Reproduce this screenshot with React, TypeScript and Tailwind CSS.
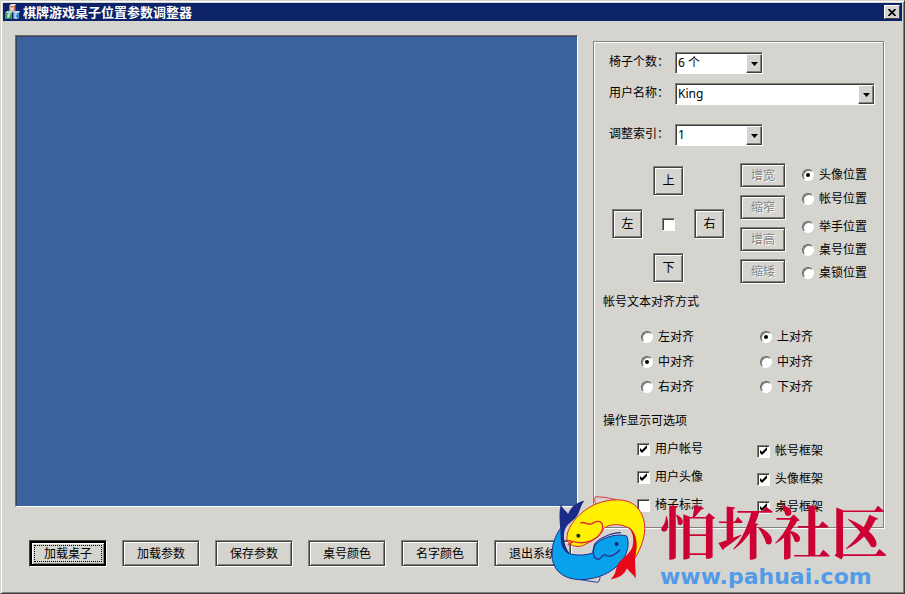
import {useState} from "react";
import type {ReactNode} from "react";

const POSITIONS_TOP = ['头像位置', '帐号位置'];
const POSITIONS_BOTTOM = ['举手位置', '桌号位置', '桌锁位置'];
const RESIZE_ACTIONS = ['增宽', '缩窄', '增高', '缩矮'];
const HORIZONTAL_ALIGN = ['左对齐', '中对齐', '右对齐'];
const VERTICAL_ALIGN = ['上对齐', '中对齐', '下对齐'];
const ACTIONS = ['加载桌子', '加载参数', '保存参数', '桌号颜色', '名字颜色', '退出系统'];

const BEVEL = 'border border-t-[#808080] border-l-[#808080] border-r-white border-b-white shadow-[inset_0_0_0_1px_#404040,inset_2px_2px_0_#fff,inset_-2px_-2px_0_#808080]';
const FOCUS_BEVEL = 'border border-t-[#404040] border-l-[#404040] border-r-white border-b-white shadow-[inset_0_0_0_2px_#000,inset_3px_3px_0_#fff,inset_-3px_-3px_0_#808080]';
const SUNKEN = 'border border-t-[#808080] border-l-[#808080] border-r-white border-b-white shadow-[inset_1px_1px_0_#404040]';

function AppIcon() {
    return (
        <svg width="15" height="16" viewBox="0 0 15 16" aria-hidden="true">
            <path d="M4 2 L6 0 H11 L10 2Z" fill="#f0d8c8" />
            <rect x="4" y="2" width="6" height="6" fill="#c8705c" />
            <path d="M10 2 L11 0 V7 L10 8Z" fill="#8c3c34" />
            <path d="M6 3 V7 M8 3 V7 M6 5 H8" stroke="#fff" strokeWidth="1" fill="none" />
            <rect x="0" y="9" width="7" height="6" fill="#2f9a62" />
            <path d="M0 9 L2 7 H8 L7 9Z" fill="#a4dcb8" />
            <path d="M3 14 V10 H6 M3 12 H5" stroke="#fff" fill="none" />
            <rect x="8" y="9" width="6" height="6" fill="#3f87cc" />
            <path d="M8 9 L9 7 H15 L14 9Z" fill="#b8dcf4" />
            <path d="M12 10 H10 V14 H12" stroke="#fff" fill="none" />
        </svg>
    )
}

function ComboBox(props: {id: string, label: string, options: string[], className: string}) {
    const {id, label, options, className} = props;
    return (
        <div className="flex items-center">
            <label htmlFor={id} className="w-[66px] pb-[2px]">{label}</label>
            <div className={`relative ${className}`}>
                <select id={id}
                        className={`block h-[22px] w-full appearance-none bg-white pl-[2px] pr-5 text-[12px] leading-5 outline-none ${SUNKEN}`}>
                    {options.map(item=><option key={item}>{item}</option>)}
                </select>
                <span className="pointer-events-none absolute top-[2px] right-[1px] bottom-[1px] flex w-4 items-center justify-center border border-t-white border-l-white border-r-[#404040] border-b-[#404040] bg-[#d4d3ce] shadow-[inset_-1px_-1px_0_#808080]">
                    <svg width="7" height="4" viewBox="0 0 7 4" aria-hidden="true">
                        <path d="M0 0 H7 L3.5 4Z" fill="#000" />
                    </svg>
                </span>
            </div>
        </div>
    )
}

function Radio(props: {name: string, label: string, checked: boolean, onChange: ()=>void, className: string}) {
    const {name, label, checked, onChange, className} = props;
    return (
        <label className={`flex items-center gap-[5px] whitespace-nowrap ${className}`}>
            <input type="radio" name={name} checked={checked} onChange={onChange}
                   className="flex size-3 shrink-0 appearance-none items-center justify-center rounded-full border border-t-[#606060] border-l-[#606060] border-r-white border-b-white bg-white shadow-[inset_1px_1px_0_#808080] checked:before:size-1 checked:before:rounded-full checked:before:bg-black" />
            <span>{label}</span>
        </label>
    )
}

function RadioGroup(props: {name: string, options: string[], initial: string}) {
    const [value, setValue] = useState(props.initial);
    return (
        <div className="w-[119px]">
            {props.options.map(item=>(
                <Radio key={item} name={props.name} label={item} checked={item === value}
                       onChange={()=>setValue(item)} className="h-[25px]" />
            ))}
        </div>
    )
}

function Check(props: {label?: string, name: string, initial?: boolean}) {
    const {label, name, initial} = props;
    return (
        <label className="flex items-center gap-[5px]">
            <span className="grid">
                <input type="checkbox" defaultChecked={initial} aria-label={label || name}
                       className={`peer col-start-1 row-start-1 size-[13px] appearance-none bg-white ${SUNKEN}`} />
                <svg viewBox="0 0 13 13" aria-hidden="true"
                     className="pointer-events-none invisible col-start-1 row-start-1 size-[13px] peer-checked:visible">
                    <path d="M3 5 V8 L5 10 L10 5 V2 L5 7Z" fill="#000" />
                </svg>
            </span>
            {label && <span>{label}</span>}
        </label>
    )
}

function ArrowButton(props: {children: ReactNode, className: string}) {
    return (
        <button type="button" className={`h-[30px] w-[31px] ${BEVEL} ${props.className}`}>
            {props.children}
        </button>
    )
}

function PositionPad() {
    const [position, setPosition] = useState(POSITIONS_TOP[0]);
    return (
        <div className="flex pt-[17px] pl-[18px]">
            <div className="mt-[2px] grid grid-cols-3 grid-rows-3 content-start items-center justify-items-center gap-x-[10px] gap-y-3">
                <ArrowButton className="col-start-2 row-start-1">上</ArrowButton>
                <ArrowButton className="col-start-1 row-start-2">左</ArrowButton>
                <div className="col-start-2 row-start-2"><Check name="居中" /></div>
                <ArrowButton className="col-start-3 row-start-2">右</ArrowButton>
                <ArrowButton className="col-start-2 row-start-3">下</ArrowButton>
            </div>
            <div className="ml-[15px] flex flex-col gap-[7px]">
                {RESIZE_ACTIONS.map(item=>(
                    <button key={item} type="button" disabled
                            className={`h-[25px] w-[46px] text-[#858585] [text-shadow:1px_1px_0_#fff] ${BEVEL}`}>
                        {item}
                    </button>
                ))}
            </div>
            <div className="ml-4 flex flex-col gap-1">
                <div>
                    {POSITIONS_TOP.map(item=>(
                        <Radio key={item} name="position" label={item} checked={item === position}
                               onChange={()=>setPosition(item)} className="h-6" />
                    ))}
                </div>
                <div>
                    {POSITIONS_BOTTOM.map(item=>(
                        <Radio key={item} name="position" label={item} checked={item === position}
                               onChange={()=>setPosition(item)} className="h-[23px]" />
                    ))}
                </div>
            </div>
        </div>
    )
}

function SettingsPanel() {
    return (
        <section className="mt-[6px] w-[291px] shrink-0 self-start border border-[#808080] pt-[10px] pb-[11px] shadow-[inset_1px_1px_0_#fff,1px_1px_0_#fff]">
            <div className="flex flex-col gap-[9px] pl-[15px]">
                <ComboBox id="chairs" label="椅子个数：" options={['6 个']} className="w-[88px]" />
                <ComboBox id="user" label="用户名称：" options={['King']} className="w-[200px]" />
                <div className="pt-[10px]">
                    <ComboBox id="index" label="调整索引：" options={['1']} className="w-[88px]" />
                </div>
            </div>
            <PositionPad />
            <h2 className="mt-[9px] pl-[9px]">帐号文本对齐方式</h2>
            <div className="flex pt-[13px] pl-[47px]">
                <RadioGroup name="horizontal" options={HORIZONTAL_ALIGN} initial="中对齐" />
                <RadioGroup name="vertical" options={VERTICAL_ALIGN} initial="上对齐" />
            </div>
            <h2 className="mt-[13px] pl-[9px]">操作显示可选项</h2>
            <div className="flex pt-[10px] pl-[43px]">
                <div className="flex w-[120px] flex-col gap-[10px]">
                    <Check name="user" label="用户帐号" initial />
                    <Check name="avatar" label="用户头像" initial />
                    <Check name="chair" label="椅子标志" />
                </div>
                <div className="flex flex-col gap-[10px] pt-[2px]">
                    <Check name="userFrame" label="帐号框架" initial />
                    <Check name="avatarFrame" label="头像框架" initial />
                    <Check name="tableFrame" label="桌号框架" initial />
                </div>
            </div>
        </section>
    )
}

function FishLogo() {
    return (
        <svg width="100" height="94" viewBox="0 0 300 282" aria-hidden="true" strokeLinejoin="round" strokeLinecap="round">
            {/* fins */}
            <path d="M147 47 Q135 22 143 14 Q170 14 205 23" fill="none" stroke="#e0343c" strokeWidth="3" />
            <path d="M92 262 Q125 268 150 271 Q159 262 155 244" fill="none" stroke="#2b3f9c" strokeWidth="3" />
            {/* blue fish */}
            <path d="M42 102 C22 130 8 160 13 202 C20 240 50 262 97 263 C152 262 195 240 221 208 C238 186 246 155 236 132 C214 126 188 130 164 142 C146 151 134 165 135 183 C113 190 84 192 62 184 C42 172 36 140 42 102Z"
                  fill="#0aa1ec" stroke="#202c8c" strokeWidth="3" />
            <path d="M39 37 C42 51 53 53 60 66 C70 42 86 31 109 26 C96 42 96 62 83 77 C68 91 54 98 49 119 C45 144 51 166 66 187 C49 182 37 160 38 133 C39 112 29 68 39 37Z"
                  fill="#1b2c87" />
            <path d="M217 122 C192 122 147 140 139 160 C132 184 137 201 151 202 C163 201 161 185 172 189 C186 198 202 188 215 174"
                  fill="none" stroke="#26318f" strokeWidth="4" />
            <circle cx="206" cy="156" r="6" fill="#17266f" />
            {/* yellow fish */}
            <path d="M57 145 C52 111 85 71 124 46 C164 22 223 15 254 35 C285 55 298 98 286 140 C280 163 272 181 259 201 C269 158 264 127 245 110 C222 94 186 94 166 110 C158 134 126 151 101 162 C82 166 63 160 57 145Z"
                  fill="#fff100" stroke="#dc2633" strokeWidth="3" />
            <path d="M98 93 C110 86 119 102 132 95 C145 86 160 84 164 101 C167 127 137 148 105 152 C90 154 76 149 58 145 L74 149 L61 158"
                  fill="none" stroke="#dc2633" strokeWidth="4" />
            <circle cx="91" cy="131" r="6" fill="#172b25" />
            <path d="M236 102 C254 114 260 139 253 166 C240 197 210 200 204 232 C202 246 197 252 188 262 C211 258 228 250 237 229 C244 241 258 249 263 260 C265 238 258 212 263 181 C271 151 263 113 236 102Z"
                  fill="#e60818" />
        </svg>
    )
}

function Watermark() {
    return (
        <div className="pointer-events-none absolute right-4 bottom-1 flex items-end gap-3">
            <div className="pb-[3px]"><FishLogo /></div>
            <div className="flex flex-col whitespace-nowrap">
                <span className="font-['Noto_Serif_CJK_SC','Noto_Sans_CJK_SC',serif] text-[57px] leading-[64px] font-bold text-[#cc0033]">怕坏社区</span>
                <span className="pt-1 font-['DejaVu_Sans',sans-serif] text-[22px] leading-6 font-bold text-[#529be8]">www.pahuai.com</span>
            </div>
        </div>
    )
}

function App() {
    return (
        <main className="relative flex min-h-screen flex-col border border-t-[#d4d3ce] border-l-[#d4d3ce] border-r-[#404040] border-b-[#404040] bg-[#d5d4cf] p-[2px] font-['Noto_Sans','Noto_Sans_CJK_SC',sans-serif] text-[12px] leading-[18px] text-black shadow-[inset_1px_1px_0_#fff,inset_-1px_-1px_0_#808080]">
            <header className="flex h-[18px] items-center gap-[3px] bg-[#0c2369] px-[2px] text-white">
                <AppIcon />
                <h1 className="flex-1 text-[13px] font-bold">棋牌游戏桌子位置参数调整器</h1>
                <button type="button" aria-label="关闭"
                        className="flex h-[14px] w-4 items-center justify-center border border-t-white border-l-white border-r-[#404040] border-b-[#404040] bg-[#d5d4cf]">
                    <svg width="8" height="7" viewBox="0 0 8 7" aria-hidden="true">
                        <path d="M0.5 0 L7.5 7 M7.5 0 L0.5 7" stroke="#000" strokeWidth="1.7" />
                    </svg>
                </button>
            </header>
            <div className="flex flex-1 gap-[15px] pt-[14px] pr-[18px] pb-6 pl-3">
                <div className="flex min-w-0 flex-1 flex-col gap-[33px]">
                    <div className="flex-1 border border-t-[#6b6b70] border-l-[#6b6b70] border-r-white border-b-white bg-[#3a629e] shadow-[inset_1px_1px_0_#38435a]" />
                    <div className="flex gap-[15px] pl-[14px]">
                        {ACTIONS.map((item, idx)=>(
                            <button key={item} type="button"
                                    className={`h-[27px] w-[78px] shrink-0 ${idx === 0 ? `p-1 ${FOCUS_BEVEL}` : BEVEL}`}>
                                {idx === 0
                                    ? <span className="flex h-full items-center justify-center border border-dotted border-black">{item}</span>
                                    : item}
                            </button>
                        ))}
                    </div>
                </div>
                <SettingsPanel />
            </div>
            <Watermark />
        </main>
    )
}

export default App;
